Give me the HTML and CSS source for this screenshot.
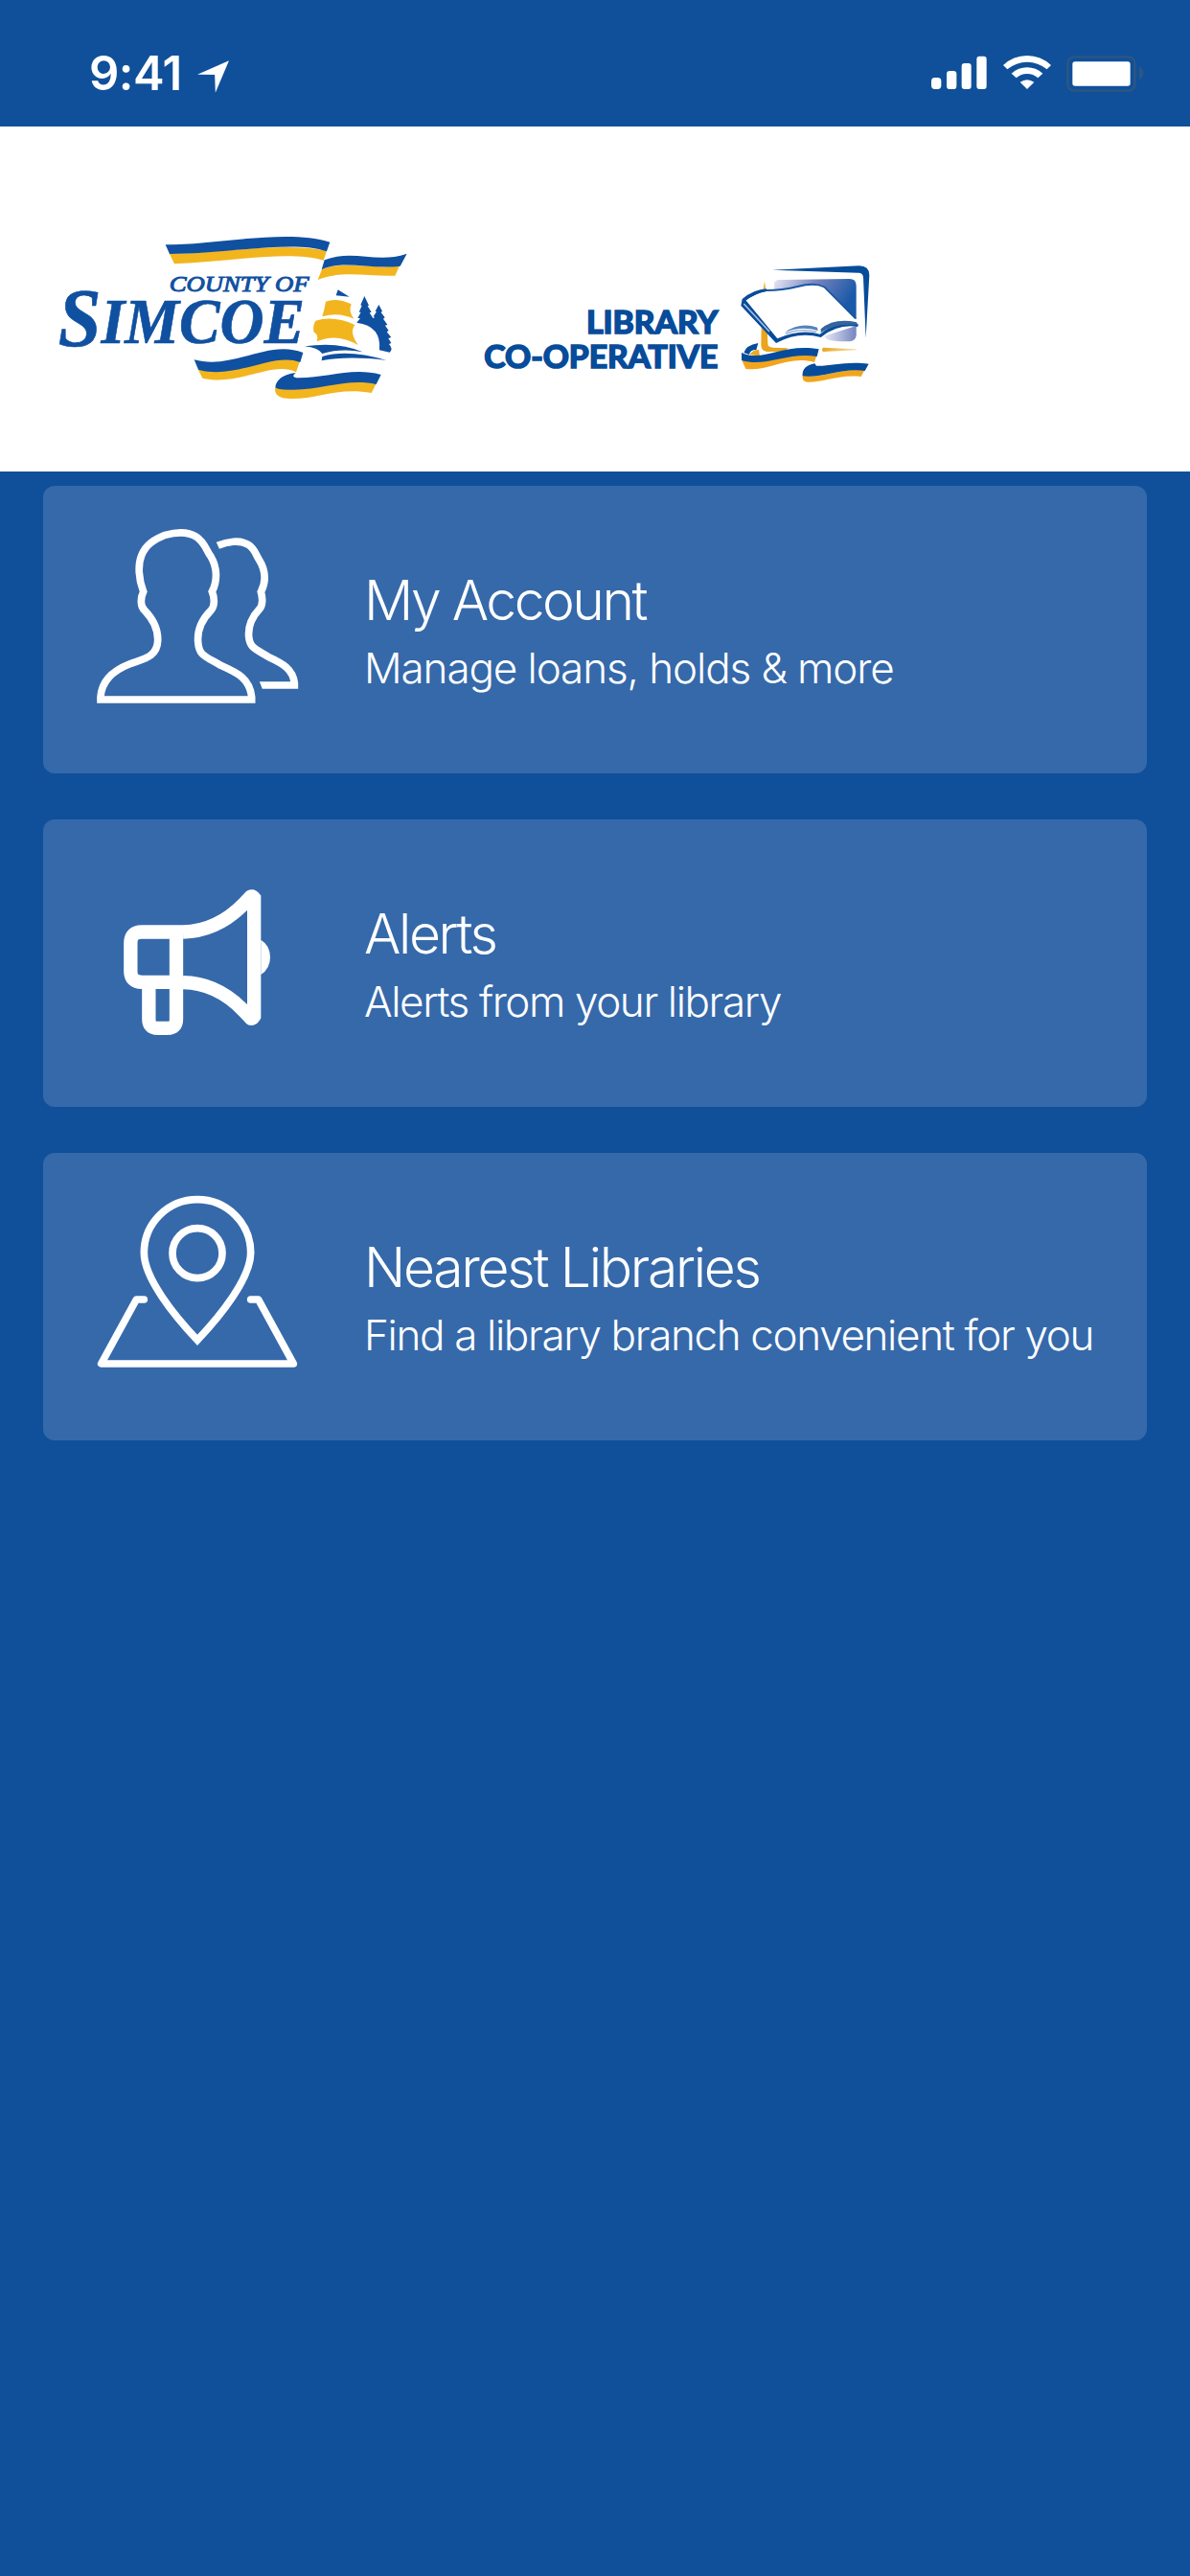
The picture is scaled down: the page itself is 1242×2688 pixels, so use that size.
FILE: index.html
```html
<!DOCTYPE html>
<html lang="en">
<head>
    <meta charset="UTF-8">
    <meta name="viewport" content="width=device-width, initial-scale=1.0">
    <title>Library Co-operative</title>
    <link rel="stylesheet" href="styles.css">
</head>
<body>

<div class="status-bar">
    <div class="status-left">
        <span class="time">9:41</span>
        <svg class="location" viewBox="0 0 100 102"><path d="M0 44 L100 0 L57 102 L55 45 Z" fill="#fff"/></svg>
    </div>
    <div class="status-right">
        <svg class="signal" viewBox="95 84 174 114" fill="#fff">
            <rect x="95" y="153" width="31" height="36" rx="11"/>
            <rect x="143" y="132" width="31" height="57" rx="10"/>
            <rect x="190" y="108" width="30" height="81" rx="9"/>
            <rect x="237" y="86" width="31" height="103" rx="9"/>
        </svg>
        <svg class="wifi" viewBox="321 84 150 114" fill="#fff">
            <path d="M321 114 Q353 84 396 84 Q439 84 471 114 L458 127 Q430 104 396 104 Q362 104 334 127 Z"/>
            <path d="M347 140 Q369 121 396 121 Q423 121 445 140 L430 154 Q415 141 396 141 Q377 141 362 154 Z"/>
            <path d="M374 167 Q396 152 418 167 L396 189 Z"/>
        </svg>
        <svg class="battery" viewBox="519 84 243 114">
            <rect x="523" y="88" width="210" height="106" rx="20" fill="none" stroke="#2e5681" stroke-width="7"/>
            <rect x="538" y="103" width="181" height="76" rx="8" fill="#fff"/>
            <path d="M747 118 Q760 126 760 139 Q760 152 747 160 Z" fill="#2e5681"/>
        </svg>
    </div>
</div>

<div class="header">
    <svg class="logo-county" viewBox="0 0 1200 600">
        <!-- top ribbon -->
        <path class="gold" d="M411 105 C560 104 760 65 903 95 L893 125 C780 92 600 130 426 136 Z"/>
        <path class="blue" d="M398 76 C560 76 780 25 913 68 L903 97 C800 60 600 104 411 105 Z"/>
        <path class="gold" d="M888 153 C960 125 1050 155 1131 142 L1117 173 C1030 176 950 155 875 186 Z"/>
        <path class="blue" d="M896 124 C985 88 1060 137 1154 104 L1133 143 C1040 155 955 122 887 154 Z"/>
        <text class="county" x="410" y="222" textLength="438" lengthAdjust="spacingAndGlyphs">COUNTY OF</text>
        <text class="simcoe" x="62" y="385" textLength="772" lengthAdjust="spacingAndGlyphs"><tspan class="simcoe-cap" dy="8">S</tspan><tspan dy="-8">IMCOE</tspan></text>
        <!-- ship and trees -->
        <path class="blue" d="M938 217 L974 239 L932 235 Z"/>
        <path class="gold" d="M900 254 Q935 241 980 262 Q970 284 988 308 Q940 285 889 301 Q896 278 900 254 Z"/>
        <path class="gold" d="M868 314 Q925 297 991 327 Q973 350 1001 390 Q935 351 872 379 Q879 357 863 350 Q858 332 868 314 Z"/>
        <path class="blue" d="M1021 237 L1035 266 L1031 268 L1043 287 L1037 289 L1048 306 L1054 303 L1049 301 L1059 286 L1055 284 L1066 264 L1077 284 L1073 288 L1085 304 L1080 308 L1093 326 L1086 329 L1097 345 L1091 349 L1105 366 L1096 369 L1105 384 L1098 387 Q1112 402 1100 413 L1068 406 Q1075 330 997 320 L1008 306 L1000 306 L1010 287 L1004 287 L1013 267 L1009 265 Z"/>
        <path class="blue" d="M834 394 Q940 378 1016 412 Q950 399 889 417 Q875 398 834 394 Z"/>
        <path class="blue" d="M889 426 Q970 402 1090 438 Q970 423 887 439 Z"/>
        <!-- bottom ribbon -->
        <path class="gold" d="M500 466 C620 498 730 405 820 438 L807 475 C735 438 630 520 514 494 Z"/>
        <path class="blue" d="M488 436 C610 470 720 370 829 414 L820 444 C735 410 620 500 501 467 Z"/>
        <path class="gold" d="M742 522 C840 548 930 490 1058 511 L1043 540 C940 520 870 560 790 558 Q735 558 742 522 Z"/>
        <path class="blue" d="M806 477 Q790 490 808 493 C900 495 980 458 1073 483 L1058 513 C970 493 890 530 800 530 Q748 532 742 522 C745 500 765 482 806 477 Z"/>
    </svg>

    <svg class="logo-library" viewBox="0 0 1380 510">
        <defs>
            <linearGradient id="screen" x1="0" y1="0" x2="1" y2="0.3">
                <stop offset="0" stop-color="#e8e8f6"/>
                <stop offset="0.5" stop-color="#7482bd"/>
                <stop offset="1" stop-color="#1a58a8"/>
            </linearGradient>
            <linearGradient id="base" x1="0" y1="0" x2="1" y2="0">
                <stop offset="0" stop-color="#e9e9f6"/>
                <stop offset="1" stop-color="#7485c0"/>
            </linearGradient>
            <linearGradient id="goldfade" x1="0" y1="0" x2="1" y2="0">
                <stop offset="0" stop-color="#e9a51e"/>
                <stop offset="1" stop-color="#f8e3b5"/>
            </linearGradient>
        </defs>
        <text class="library" x="396" y="293" textLength="412" lengthAdjust="spacingAndGlyphs">LIBRARY</text>
        <text class="library" x="76" y="403" textLength="732" lengthAdjust="spacingAndGlyphs">CO-OPERATIVE</text>
        <!-- screen -->
        <path class="navy" d="M978 95 L1250 82 Q1282 82 1282 112 L1271 308 L1263 118 Q1262 104 1248 104 Z"/>
        <path d="M984 160 L984 140 Q984 126 1000 126 L1220 123 Q1241 123 1241 145 L1241 250 L1140 155 Z" fill="url(#screen)"/>
        <path d="M1140 302 L1241 270 L1241 300 Q1238 318 1220 319 Q1170 320 1148 311 Z" fill="url(#base)"/>
        <!-- gold frame -->
        <path d="M954 130 L958 158 L949 158 Z" fill="#edb33e"/>
        <path d="M944 275 L963 292 L964 325 Q964 338 980 338 L1028 340 L1015 350 L962 351 Q943 349 943 330 Z" fill="#e9a51e"/>
        <path d="M1137 338 L1242 343 L1242 346 L1137 351 Q1131 345 1137 338 Z" fill="url(#goldfade)"/>
        <!-- open book -->
        <path d="M884 188 Q925 158 958 157 Q1000 160 1055 147 Q1110 130 1143 147 L1240 250 L1245 268 Q1185 260 1130 300 Q1060 282 992 318 L884 208 Z" fill="#fff"/>
        <path d="M889 192 Q925 163 960 159 Q1010 159 1058 147 Q1110 133 1141 148 L1239 247" fill="none" stroke="#1857a3" stroke-width="6"/>
        <path d="M884 186 Q920 156 960 154 L960 161 Q925 168 895 190 L994 310 Q1065 278 1127 296 Q1180 253 1247 264 L1246 273 Q1184 263 1130 306 Q1060 286 990 324 L880 207 Z" class="navy"/>
        <path d="M889 201 L969 288" fill="none" stroke="#a9bfdf" stroke-width="5"/>
        <path d="M1018 290 Q1065 257 1119 275 L1121 285 Q1069 270 1018 290 Z" fill="#5384bd"/>
        <path d="M1130 280 Q1172 244 1242 259 L1246 268 Q1177 260 1130 292 Z" fill="#36649f"/>
        <path d="M1020 294 Q1070 277 1117 289" fill="none" stroke="#91abd0" stroke-width="4"/>
        <!-- ribbon -->
        <path class="navy" d="M889 354 Q895 331 934 324 L928 345 Q908 345 906 360 Z"/>
        <path d="M907 360 Q920 343 936 345 L939 365 Z" fill="#edaa20"/>
        <path d="M882 376 C950 401 1030 349 1118 360 L1110 384 C1030 360 965 414 895 405 Z" fill="#f2a51c"/>
        <path class="navy" d="M882 354 C950 386 1010 323 1124 343 L1118 366 C1030 350 957 401 882 378 Z"/>
        <path d="M1073 424 C1130 438 1190 401 1267 409 L1256 429 C1190 421 1140 447 1088 446 Q1070 445 1073 424 Z" fill="#f2a51c"/>
        <path class="navy" d="M1111 388 L1116 395 C1160 397 1210 379 1280 389 L1268 411 C1200 400 1130 436 1073 427 Q1070 396 1111 388 Z"/>
    </svg>
</div>

<div class="menu">
    <div class="menu-item">
        <svg class="menu-icon" viewBox="45 81 900 900" fill="none" stroke="#fff" stroke-width="23">
            <path d="M225 750 V742 C228 693 262 660 315 639 C355 623 402 620 404 565 C405 530 393 502 363 471 C348 458 350 431 359 412 C344 374 341 329 353 299 C367 263 394 249 427 235 C460 226 497 223 524 240 C552 258 556 284 570 302 C590 336 592 377 574 412 C582 431 583 457 571 470 C543 498 527 529 530 569 C533 612 550 613 601 643 C655 667 692 684 698 742 V750 Z"/>
            <path d="M592 268 C621 255 661 249 687 265 C707 277 712 298 720 310 C741 343 744 380 727 413 C733 432 733 456 722 467 C698 493 686 519 689 553 C693 590 710 591 752 617 C796 637 827 655 832 698 V705 H722"/>
            <path d="M712 680 L729 725" stroke="#3569aa" stroke-width="10"/>
        </svg>
        <div class="menu-text">
            <p class="title account">My Account</p>
            <p class="subtitle manage">Manage loans, holds &amp; more</p>
        </div>
    </div>
    <div class="menu-item">
        <svg class="menu-icon" viewBox="45 45 900 900" fill="none" stroke="#fff" stroke-width="43">
            <path d="M483 397.500 H354 Q319 397.500 319 432 V520 Q319 554.500 354 554.500 H483"/>
            <path d="M376 555 V671 Q376 698.500 403 698.500 H435 Q462 698.500 462 671 V397"/>
            <path d="M483 397.500 Q590 395 674 309 L692 290 Q698 282 705.500 291 V661 Q698 674 692 664 L674 645 Q590 557 483 555.500"/>
            <path d="M727 422 Q756 440 756 476 Q756 512 727 531 Z" fill="#fff" stroke="none"/>
        </svg>
        <div class="menu-text">
            <p class="title alerts">Alerts</p>
            <p class="subtitle from">Alerts from your library</p>
        </div>
    </div>
    <div class="menu-item">
        <svg class="menu-icon" viewBox="45 39 900 900" fill="none" stroke="#fff" stroke-width="23">
            <path d="M528 625 C455 548 361 431 361 352 C361 258 437 185 528 185 C619 185 695 258 695 352 C695 431 601 548 528 625 Z"/>
            <circle cx="528" cy="353" r="78"/>
            <path d="M361 498 H337 L227 699 H829 L719 498 H695" stroke-linecap="round" stroke-linejoin="round"/>
        </svg>
        <div class="menu-text">
            <p class="title nearest">Nearest Libraries</p>
            <p class="subtitle find">Find a library branch convenient for you</p>
        </div>
    </div>
</div>

</body>
</html>
```
FILE: styles.css
```css
body {
    margin: 0;
    min-height: 2688px;
    background: #10509a;
    color: #fff;
    font-family: Inter, "Liberation Sans", sans-serif;
}
.status-bar {
    box-sizing: border-box;
    height: 132px;
    padding: 20px 49px 0 93px;
    display: flex;
    justify-content: space-between;
    align-items: center;
}
.status-left, .status-right {
    display: flex;
    align-items: center;
}
.time {
    font-size: 49px;
    font-weight: 600;
    width: 113px;
    letter-spacing: -0.5px;
}
.location {
    width: 33px;
    height: 34px;
    margin-top: 8px;
}
.status-right {
    padding-top: 2px;
}
.signal {
    width: 58px;
    height: 38px;
    margin-right: 17px;
}
.wifi {
    width: 50px;
    height: 38px;
    margin-right: 16px;
}
.battery {
    width: 81px;
    height: 38px;
    margin-right: -1px;
}
.header {
    box-sizing: border-box;
    height: 360px;
    padding: 98px 40px 0;
    background: #fff;
    display: flex;
    gap: 40px;
}
.logo-county {
    width: 400px;
    height: 200px;
}
.logo-library {
    width: 460px;
    height: 170px;
    margin-top: 20px;
}
.blue {
    fill: #1050a0;
}
.navy {
    fill: #074c9a;
}
.gold {
    fill: #f2b51e;
}
.county {
    fill: #1050a0;
    font: italic 72px "Liberation Serif", serif;
    stroke: #1050a0;
    stroke-width: 3px;
}
.simcoe {
    fill: #1050a0;
    font: italic bold 206px "Liberation Serif", serif;
    stroke: #1050a0;
    stroke-width: 2px;
}
.simcoe-cap {
    font-size: 260px;
}
.library {
    fill: #074c9a;
    font: 700 96px Lato, sans-serif;
    stroke: #074c9a;
    stroke-width: 5px;
}
.menu {
    display: flex;
    flex-direction: column;
    gap: 48px;
    padding: 15px 45px;
}
.menu-item {
    display: flex;
    height: 300px;
    background: #3569aa;
    border-radius: 12px;
}
.menu-icon {
    width: 300px;
    height: 300px;
    flex: none;
}
.menu-text {
    padding: 82px 0 0 35px;
    white-space: nowrap;
    font-weight: 300;
}
.menu-text p {
    margin: 0;
}
.title {
    font-size: 57px;
    line-height: 76px;
}
.subtitle {
    font-size: 44px;
    line-height: 64px;
}
.account {
    letter-spacing: -2.5px;
}
.alerts {
    letter-spacing: -2.4px;
}
.nearest {
    letter-spacing: -2.3px;
}
.manage {
    letter-spacing: -1.1px;
}
.from {
    letter-spacing: -1.4px;
}
.find {
    letter-spacing: -1.35px;
}
```
